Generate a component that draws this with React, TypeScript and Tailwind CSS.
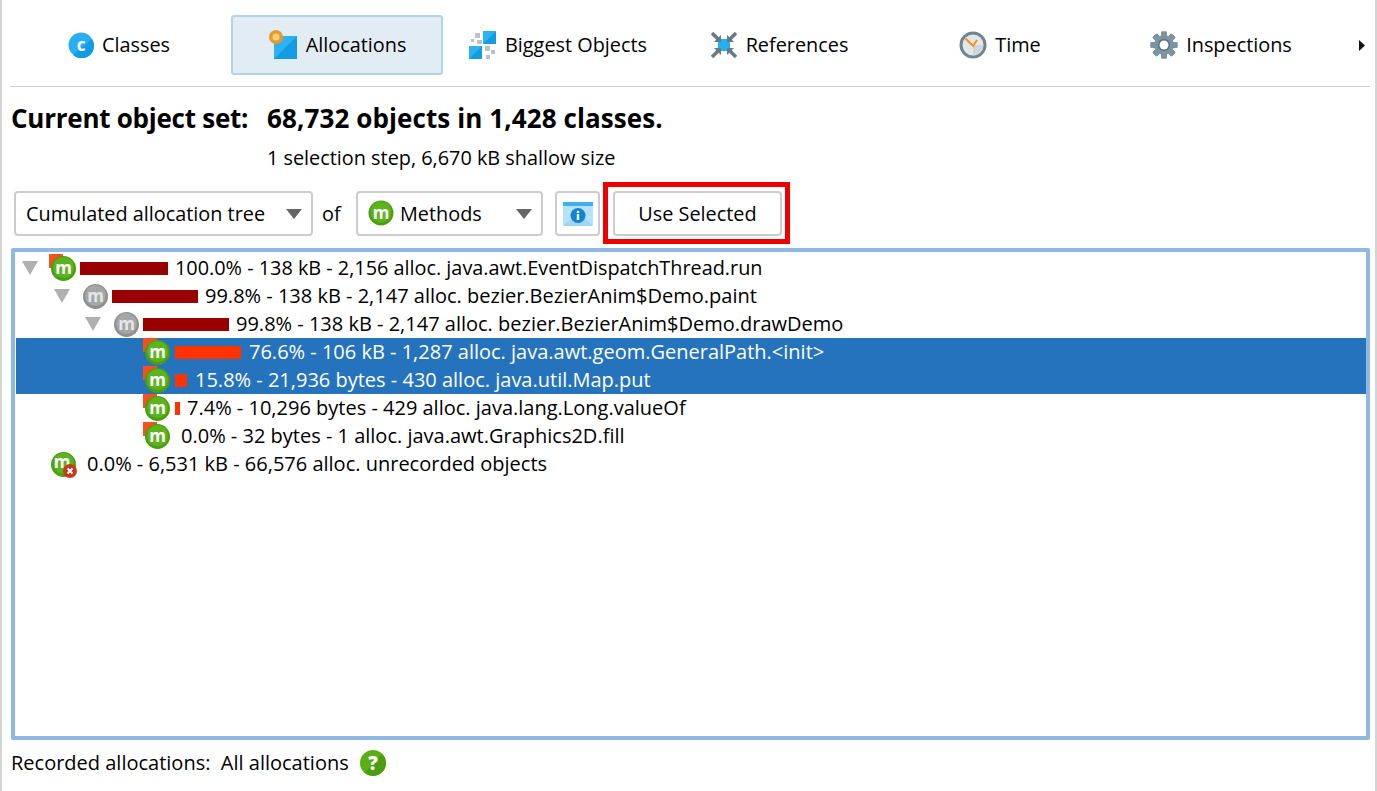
import React from 'react';

const FONT = '"Open Sans", "Noto Sans", sans-serif';

// round "m" method badge, optional hot-spot flag behind it
const MethodIcon = ({ gray, flag, error }: { gray?: boolean; flag?: boolean; error?: boolean }) => (
  <svg width="28" height="28" viewBox="0 0 28 28" className="shrink-0">
    {flag && <rect x="0" y="0" width="14" height="14" fill="#f4511e" />}
    <circle cx="14.5" cy="14.5" r="12.5" fill={gray ? '#8f8f8f' : '#4a9e12'} />
    <circle cx="14.5" cy="13.5" r="10.5" fill={gray ? '#a6a6a6' : '#5cb31c'} />
    <text x={error ? 13 : 14.5} y={error ? 18 : 19.5} textAnchor="middle" fontSize="17" fontWeight="700" fill={gray ? '#e6e6e6' : '#ffffff'} fontFamily="Open Sans, sans-serif">m</text>
    {error && (
      <g>
        <circle cx="21" cy="21" r="7" fill="#c8391d" />
        <path d="M18.500 18.500l5 5M23.500 18.500l-5 5" stroke="#fff" strokeWidth="2" />
      </g>
    )}
  </svg>
);

const Expander = () => (
  <svg width="16" height="14" viewBox="0 0 16 14" className="shrink-0">
    <path d="M0 0h16L8 14Z" fill="#b0b0b0" />
  </svg>
);

const ClassesIcon = () => (
  <svg width="26" height="26" viewBox="0 0 26 26">
    <circle cx="13" cy="13" r="12.5" fill="#29aef2" />
    <path d="M24 7A12.5 12.5 0 0 1 5 23Z" fill="#129ce3" />
    <text x="13" y="18.500" textAnchor="middle" fontSize="17" fontWeight="700" fill="#fff" fontFamily="Open Sans, sans-serif">c</text>
  </svg>
);

const AllocationsIcon = () => (
  <svg width="30" height="30" viewBox="0 0 30 30">
    <rect x="6" y="6" width="23" height="23" fill="#129ce3" />
    <path d="M29 6v0L6 29V6Z" fill="#2fb2f4" />
    <circle cx="8" cy="7" r="7" fill="#e89a2c" />
    <circle cx="8" cy="7" r="3.5" fill="#f2cf7e" />
  </svg>
);

const BiggestIcon = () => (
  <svg width="28" height="30" viewBox="0 0 28 30">
    <path d="M14 14V1h13v13Z" fill="#129ce3" />
    <path d="M14 14V1h13Z" fill="#2fb2f4" />
    <path d="M0 29V16h13v13Z" fill="#129ce3" />
    <path d="M0 29V16h13Z" fill="#2fb2f4" />
    <g fill="#b9c2c8">
      <rect x="6" y="3" width="5" height="5" />
      <rect x="2" y="9" width="3" height="3" />
      <rect x="8" y="10" width="5" height="4" />
      <rect x="16" y="16" width="5" height="5" />
      <rect x="22" y="20" width="4" height="4" />
      <rect x="17" y="25" width="4" height="4" />
    </g>
  </svg>
);

const ReferencesIcon = () => (
  <svg width="28" height="28" viewBox="0 0 28 28">
    <rect x="8" y="8" width="12" height="12" fill="#29aef2" />
    <g stroke="#647a88" strokeWidth="3.500" fill="none">
      <path d="M2 2L9 9" />
      <path d="M26 2L19 9" />
      <path d="M2 26L9 19" />
      <path d="M26 26L19 19" />
    </g>
    <g fill="#647a88">
      <path d="M11 11H4l7-7Z" />
      <path d="M17 11h7l-7-7Z" />
      <path d="M11 17H4l7 7Z" />
      <path d="M17 17h7l-7 7Z" />
    </g>
  </svg>
);

const TimeIcon = () => (
  <svg width="28" height="28" viewBox="0 0 28 28">
    <circle cx="14" cy="14" r="13.500" fill="#6b8593" />
    <circle cx="14" cy="14" r="10.500" fill="#e4e7e8" />
    <path d="M14 24.500A10.500 10.500 0 0 0 24.500 14H14Z" fill="#cfd5d8" />
    <path d="M6.500 7.500L14 15l4-6" stroke="#f0921e" strokeWidth="2" fill="none" />
  </svg>
);

const GearIcon = () => (
  <svg width="28" height="28" viewBox="0 0 28 28">
    <g fill="#7c94a1">
      {[0, 45, 90, 135, 180, 225, 270, 315].map(a => (
        <rect key={a} x="11" y="0.500" width="6" height="27" rx="1" transform={`rotate(${a} 14 14)`} />
      ))}
    </g>
    <circle cx="14" cy="14" r="10" fill="#7c94a1" />
    <circle cx="14" cy="14" r="6" fill="#596f7c" />
    <circle cx="14" cy="14" r="4.500" fill="#fff" />
  </svg>
);

const InfoIcon = () => (
  <svg width="30" height="24" viewBox="0 0 30 24">
    <rect x="0" y="0" width="30" height="24" fill="#b5e3fa" />
    <rect x="0" y="0" width="30" height="4" fill="#3fb0ee" />
    <path d="M0 24L16 10l14 14Z" fill="#9ed6f4" />
    <circle cx="15" cy="13.500" r="7.500" fill="#1283d6" />
    <rect x="13.800" y="12" width="2.400" height="6" fill="#fff" />
    <rect x="13.800" y="8.800" width="2.400" height="2.200" fill="#fff" />
  </svg>
);

const HelpIcon = () => (
  <svg width="26" height="26" viewBox="0 0 26 26">
    <circle cx="13" cy="13" r="13" fill="#5cae17" />
    <path d="M26 13A13 13 0 0 1 5 23L22 4a13 13 0 0 1 4 9Z" fill="#4b9c10" />
    <text x="13" y="20" textAnchor="middle" fontSize="19" fontWeight="800" fill="#fff" fontFamily="Open Sans, sans-serif">?</text>
  </svg>
);

const Caret = () => (
  <svg width="16" height="10" viewBox="0 0 16 10" className="shrink-0">
    <path d="M0 0h16L8 10Z" fill="#666" />
  </svg>
);

const tabs = [
  { label: 'Classes', icon: <ClassesIcon />, shift: 'pl-[6px]' },
  { label: 'Allocations', icon: <AllocationsIcon />, active: true },
  { label: 'Biggest Objects', icon: <BiggestIcon /> },
  { label: 'References', icon: <ReferencesIcon /> },
  { label: 'Time', icon: <TimeIcon /> },
  { label: 'Inspections', icon: <GearIcon /> },
];

type Row = {
  text: string;
  left: number;
  arrow?: boolean;
  gray?: boolean;
  flag?: boolean;
  error?: boolean;
  bar?: number;
  hot?: boolean;
  selected?: boolean;
  gap: number;
};

const rows: Row[] = [
  { text: '100.0% - 138 kB - 2,156 alloc. java.awt.EventDispatchThread.run', left: 6, arrow: true, flag: true, bar: 88, gap: 7 },
  { text: '99.8% - 138 kB - 2,147 alloc. bezier.BezierAnim$Demo.paint', left: 38, arrow: true, gray: true, bar: 86, gap: 7 },
  { text: '99.8% - 138 kB - 2,147 alloc. bezier.BezierAnim$Demo.drawDemo', left: 69, arrow: true, gray: true, bar: 86, gap: 7 },
  { text: '76.6% - 106 kB - 1,287 alloc. java.awt.geom.GeneralPath.<init>', left: 127, flag: true, bar: 66, hot: true, selected: true, gap: 8 },
  { text: '15.8% - 21,936 bytes - 430 alloc. java.util.Map.put', left: 127, flag: true, bar: 12, hot: true, selected: true, gap: 8 },
  { text: '7.4% - 10,296 bytes - 429 alloc. java.lang.Long.valueOf', left: 127, flag: true, bar: 5, hot: true, gap: 7 },
  { text: '0.0% - 32 bytes - 1 alloc. java.awt.Graphics2D.fill', left: 127, flag: true, gap: 10 },
  { text: '0.0% - 6,531 kB - 66,576 alloc. unrecorded objects', left: 33, error: true, gap: 10 },
];

export default function App() {
  return (
    <div className="w-[1377px] h-[791px] bg-white overflow-hidden border-l-2 border-r-2 border-[#d4d4d4] text-[19.85px] text-black" style={{ fontFamily: FONT }}>
      {/* Tab strip */}
      <div className="ml-[8px] w-[1360px] h-[71px] pt-[15px] border-b border-[#cfcfcf] box-content flex items-start">
        <div className="flex gap-[9px] w-[1326px]">
          {tabs.map(t => (
            <div
              key={t.label}
              className={`w-[212px] h-[60px] rounded-[3px] flex items-center justify-center gap-[8px] border-2 ${t.active ? 'bg-[#e2ecf5] border-[#b4d2e9]' : 'border-transparent'} ${t.shift ?? ''}`}
            >
              {t.icon}
              <span>{t.label}</span>
            </div>
          ))}
        </div>
        <div className="h-[60px] flex items-center ml-[23px]">
          <svg width="6" height="11" viewBox="0 0 6 11"><path d="M0 0l6 5.500L0 11Z" fill="#111" /></svg>
        </div>
      </div>

      {/* Current object set */}
      <div className="ml-[9px] mt-[14px] flex text-[26px] font-bold leading-[34px] whitespace-nowrap">
        <div className="w-[256px] tracking-[-0.25px]">Current object set:</div>
        <div className="tracking-[0.1px]">68,732 objects in 1,428 classes.</div>
      </div>
      <div className="ml-[265px] mt-[9px] leading-[28px]">1 selection step, 6,670 kB shallow size</div>

      {/* Toolbar */}
      <div className="ml-[12px] mt-[10px] h-[62px] flex items-start">
        <div className="mt-[9px] w-[299px] h-[45px] rounded-[4px] border-2 border-[#cccccc] flex items-center justify-between pl-[10px] pr-[9px]">
          <span>Cumulated allocation tree</span>
          <Caret />
        </div>
        <span className="mt-[9px] h-[45px] flex items-center ml-[9px] w-[34px]">of</span>
        <div className="mt-[9px] w-[187px] h-[45px] rounded-[4px] border-2 border-[#cccccc] flex items-center justify-between pl-[10px] pr-[9px]">
          <span className="flex items-center gap-[6px]">
            <svg width="26" height="26" viewBox="0 0 26 26">
              <circle cx="13" cy="13" r="12.500" fill="#4a9e12" />
              <circle cx="13" cy="12" r="10.500" fill="#5cb31c" />
              <text x="13" y="18.500" textAnchor="middle" fontSize="17" fontWeight="700" fill="#fff" fontFamily="Open Sans, sans-serif">m</text>
            </svg>
            Methods
          </span>
          <Caret />
        </div>
        <div className="mt-[9px] ml-[12px] w-[45px] h-[45px] rounded-[4px] border-2 border-[#cccccc] flex items-center justify-center">
          <InfoIcon />
        </div>
        <div className="ml-[3px] w-[187px] h-[62px] border-[5px] border-[#ee0000] flex items-start justify-end pt-[4px] pr-[3px]">
          <div className="w-[169px] h-[45px] rounded-[4px] border-2 border-[#cccccc] flex items-center justify-center">Use Selected</div>
        </div>
      </div>

      {/* Allocation tree */}
      <div className="ml-[9px] mt-[4px] w-[1359px] h-[492px] rounded-[2px] border-[4px] border-[#90b9e2] pt-[2px] pl-px">
        {rows.map((r, i) => (
          <div
            key={r.text}
            className={`h-[28px] flex items-center whitespace-nowrap ${i > 0 ? 'text-[20px]' : ''} ${r.selected ? 'bg-[#2673bd] text-white' : ''}`}
            style={{ paddingLeft: r.left }}
          >
            {r.arrow && (
              <span className="w-[27px] flex">
                <Expander />
              </span>
            )}
            <MethodIcon gray={r.gray} flag={r.flag} error={r.error} />
            {r.bar && (
              <span
                className={`h-[13px] shrink-0 ${r.hot ? 'ml-[4px] bg-[#ff3300]' : 'ml-[3px] bg-[#990000]'}`}
                style={{ width: r.bar }}
              />
            )}
            <span style={{ marginLeft: r.gap }}>{r.text}</span>
          </div>
        ))}
      </div>

      {/* Footer */}
      <div className="ml-[9px] mt-[8px] flex items-center h-[30px] gap-[11px] text-[20px]">
        <span className="whitespace-pre">Recorded allocations:  All allocations</span>
        <HelpIcon />
      </div>
    </div>
  );
}
